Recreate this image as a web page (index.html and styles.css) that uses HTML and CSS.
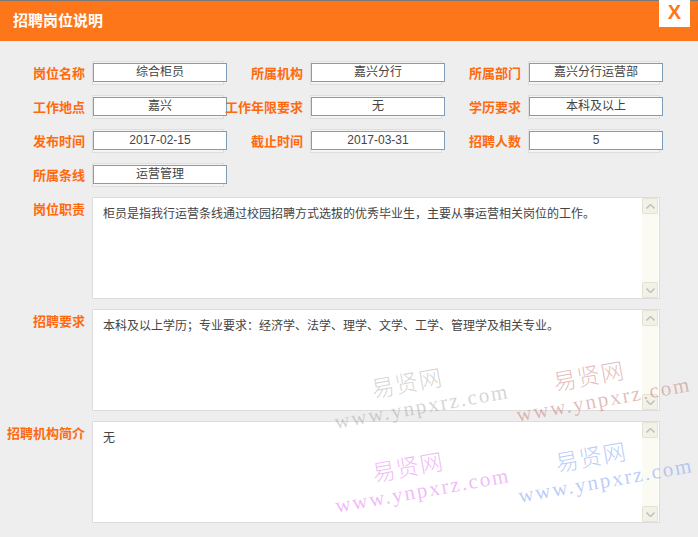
FILE: index.html
```html
<!DOCTYPE html>
<html lang="zh-CN">
<head>
<meta charset="utf-8">
<title>招聘岗位说明</title>
<link rel="stylesheet" href="styles.css">
</head>
<body>
<div class="header">
  <div class="title">招聘岗位说明</div>
  <div class="close">X</div>
</div>
<div class="form">
  <div class="row">
    <div class="group"><div class="label">岗位名称</div><div class="field"><div class="val">综合柜员</div></div></div>
    <div class="group"><div class="label">所属机构</div><div class="field"><div class="val">嘉兴分行</div></div></div>
    <div class="group"><div class="label">所属部门</div><div class="field"><div class="val">嘉兴分行运营部</div></div></div>
  </div>
  <div class="row">
    <div class="group"><div class="label">工作地点</div><div class="field"><div class="val">嘉兴</div></div></div>
    <div class="group"><div class="label">工作年限要求</div><div class="field"><div class="val">无</div></div></div>
    <div class="group"><div class="label">学历要求</div><div class="field"><div class="val">本科及以上</div></div></div>
  </div>
  <div class="row">
    <div class="group"><div class="label">发布时间</div><div class="field"><div class="val">2017-02-15</div></div></div>
    <div class="group"><div class="label">截止时间</div><div class="field"><div class="val">2017-03-31</div></div></div>
    <div class="group"><div class="label">招聘人数</div><div class="field"><div class="val">5</div></div></div>
  </div>
  <div class="row">
    <div class="group"><div class="label">所属条线</div><div class="field"><div class="val">运营管理</div></div></div>
  </div>

  <div class="area-row">
    <div class="label alabel">岗位职责</div>
    <div class="area">
      <div class="atext">柜员是指我行运营条线通过校园招聘方式选拔的优秀毕业生，主要从事运营相关岗位的工作。</div>
      <div class="sbar"><div class="sbtn up"><svg width="9" height="5" viewBox="0 0 9 5"><path d="M0.5 4.5 L4.5 0.5 L8.5 4.5" fill="none" stroke="#c4c3b8" stroke-width="1.6"/></svg></div><div class="sbtn down"><svg width="9" height="5" viewBox="0 0 9 5"><path d="M0.5 0.5 L4.5 4.5 L8.5 0.5" fill="none" stroke="#c4c3b8" stroke-width="1.6"/></svg></div></div>
    </div>
  </div>
  <div class="area-row">
    <div class="label alabel">招聘要求</div>
    <div class="area">
      <div class="atext">本科及以上学历；专业要求：经济学、法学、理学、文学、工学、管理学及相关专业。</div>
      <div class="sbar"><div class="sbtn up"><svg width="9" height="5" viewBox="0 0 9 5"><path d="M0.5 4.5 L4.5 0.5 L8.5 4.5" fill="none" stroke="#c4c3b8" stroke-width="1.6"/></svg></div><div class="sbtn down"><svg width="9" height="5" viewBox="0 0 9 5"><path d="M0.5 0.5 L4.5 4.5 L8.5 0.5" fill="none" stroke="#c4c3b8" stroke-width="1.6"/></svg></div></div>
    </div>
  </div>
  <div class="area-row">
    <div class="label alabel">招聘机构简介</div>
    <div class="area">
      <div class="atext">无</div>
      <div class="sbar"><div class="sbtn up"><svg width="9" height="5" viewBox="0 0 9 5"><path d="M0.5 4.5 L4.5 0.5 L8.5 4.5" fill="none" stroke="#c4c3b8" stroke-width="1.6"/></svg></div><div class="sbtn down"><svg width="9" height="5" viewBox="0 0 9 5"><path d="M0.5 0.5 L4.5 4.5 L8.5 0.5" fill="none" stroke="#c4c3b8" stroke-width="1.6"/></svg></div></div>
    </div>
  </div>
</div>

<div class="wm wm-gray"><div class="cn">易贤网</div><div class="en">www.ynpxrz.com</div></div>
<div class="wm wm-red"><div class="cn">易贤网</div><div class="en">www.ynpxrz.com</div></div>
<div class="wm wm-pink"><div class="cn">易贤网</div><div class="en">www.ynpxrz.com</div></div>
<div class="wm wm-blue"><div class="cn">易贤网</div><div class="en">www.ynpxrz.com</div></div>
</body>
</html>
```
FILE: styles.css
```css
* { box-sizing: border-box; }
html, body { margin: 0; padding: 0; }
body {
  background: #eeeeee;
  font-family: "Noto Sans CJK SC", "Liberation Sans", sans-serif;
  width: 698px;
  height: 537px;
  overflow: hidden;
  position: relative;
}
.header {
  height: 41px;
  border-top: 1px solid #7a7a7a;
  background: #fe761a;
  position: relative;
}
.title {
  padding-left: 13px;
  line-height: 38px;
  color: #fff;
  font-weight: bold;
  font-size: 15px;
}
.close {
  position: absolute;
  top: -1px;
  left: 659px;
  width: 31px;
  height: 27px;
  background: #fff;
  color: #fe761a;
  font-family: "Liberation Sans", sans-serif;
  font-weight: bold;
  font-size: 20px;
  line-height: 25px;
  text-align: center;
}
.form {
  padding: 20px 0 0 6px;
  display: flex;
  flex-direction: column;
  gap: 10px;
}
.row {
  display: flex;
  height: 24px;
}
.group {
  display: flex;
  align-items: center;
  width: 218px;
}
.label {
  width: 79px;
  margin-right: 7px;
  text-align: right;
  color: #ff6a0e;
  font-weight: bold;
  font-size: 13px;
  white-space: nowrap;
  line-height: 16px;
}
.field {
  width: 132px;
  height: 24px;
  border: 1px solid #dedede;
  background: #f4f4f4;
}
.val {
  margin-top: 1px;
  width: 134px;
  height: 19px;
  border: 1px solid #7f9db9;
  background: #fff;
  color: #444;
  font-family: "Liberation Sans", "Noto Sans CJK SC", sans-serif;
  font-size: 12px;
  line-height: 17px;
  text-align: center;
  white-space: nowrap;
}
.area-row {
  display: flex;
  align-items: flex-start;
}
.alabel {
  padding-top: 4px;
}
.area {
  width: 568px;
  height: 102px;
  border: 1px solid #dcdcdc;
  background: #fff;
  display: flex;
  justify-content: space-between;
}
.atext {
  padding: 7px 0 0 10px;
  font-size: 12px;
  line-height: 16px;
  color: #444;
}
.sbar {
  width: 16px;
  background: #fbfbf3;
  display: flex;
  flex-direction: column;
  justify-content: space-between;
  margin-right: 1px;
}
.sbtn {
  width: 16px;
  height: 16px;
  border: 1px solid #e3e2d4;
  border-radius: 2px;
  background: #f3f2e8;
  display: flex;
  align-items: center;
  justify-content: center;
}
.wm {
  position: absolute;
  width: 172px;
  transform: rotate(-10deg);
  white-space: nowrap;
  line-height: 1;
  font-family: "Liberation Serif", "Noto Sans CJK SC", serif;
  pointer-events: none;
}
.wm .cn {
  font-size: 23px;
  margin-left: 42px;
  letter-spacing: 1px;
  font-weight: 300;
}
.wm .en {
  font-size: 21px;
  letter-spacing: 2px;
  margin-top: 3px;
}
.wm-gray { left: 331px; top: 371px; color: rgba(160,160,160,0.45); }
.wm-red { left: 513px; top: 364px; color: rgba(190,110,100,0.45); }
.wm-pink { left: 332px; top: 455px; color: rgba(225,120,240,0.5); }
.wm-blue { left: 515px; top: 445px; color: rgba(120,155,240,0.5); }
```
